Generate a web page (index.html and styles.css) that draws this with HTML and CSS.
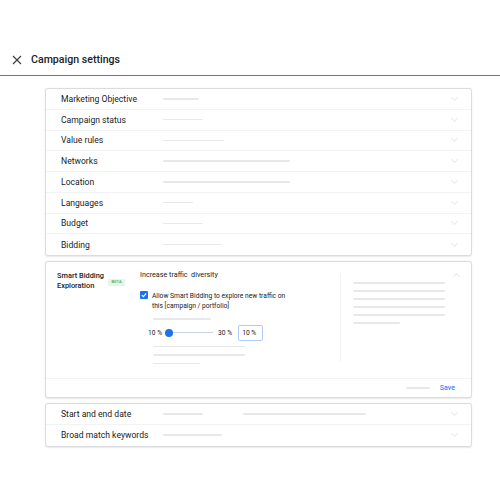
FILE: index.html
```html
<!DOCTYPE html>
<html>
<head>
<meta charset="utf-8">
<link rel="stylesheet" href="styles.css">
</head>
<body>
<header class="topbar">
  <svg class="close" width="10" height="10" viewBox="0 0 10 10"><path d="M1 1L9 9M9 1L1 9" stroke="#3c4043" stroke-width="1.2" fill="none"/></svg>
  <h1 class="title">Campaign settings</h1>
</header>
<main class="content">
  <section class="card">
    <div class="row"><span class="label">Marketing Objective</span><span class="ph" style="width:36px"></span><span class="chev"></span></div>
    <div class="row"><span class="label">Campaign status</span><span class="ph" style="width:40px"></span><span class="chev"></span></div>
    <div class="row"><span class="label">Value rules</span><span class="ph" style="width:61px"></span><span class="chev"></span></div>
    <div class="row"><span class="label">Networks</span><span class="ph" style="width:127px"></span><span class="chev"></span></div>
    <div class="row"><span class="label">Location</span><span class="ph" style="width:127px"></span><span class="chev"></span></div>
    <div class="row"><span class="label">Languages</span><span class="ph" style="width:30px"></span><span class="chev"></span></div>
    <div class="row"><span class="label">Budget</span><span class="ph" style="width:40px"></span><span class="chev"></span></div>
    <div class="row last"><span class="label">Bidding</span><span class="ph" style="width:59px"></span><span class="chev"></span></div>
  </section>

  <section class="card expanded">
    <div class="exp-body">
      <div class="exp-title">
        <span class="exp-name">Smart Bidding<br>Exploration</span>
        <span class="beta">BETA</span>
      </div>
      <div class="exp-main">
        <div class="sub">Increase traffic&nbsp; diversity</div>
        <div class="check-row">
          <span class="checkbox"><svg width="8" height="8" viewBox="0 0 8 8"><path d="M1.8 4.1L3.3 5.6L6.2 2.5" stroke="#fff" stroke-width="1.1" fill="none"/></svg></span>
          <span class="check-text">Allow Smart Bidding to explore new traffic on<br>this [campaign / portfolio]</span>
        </div>
        <div class="indent">
          <span class="ph" style="width:58px"></span>
          <div class="slider-row">
            <span class="pct">10 %</span>
            <span class="slider"><span class="knob"></span><span class="track"></span></span>
            <span class="pct">30 %</span>
            <span class="input">10 %</span>
          </div>
          <div class="ph-stack">
            <span class="ph" style="width:92px"></span>
            <span class="ph" style="width:92px"></span>
            <span class="ph" style="width:47px"></span>
          </div>
        </div>
      </div>
      <div class="exp-side">
        <span class="ph" style="width:92px"></span>
        <span class="ph" style="width:92px"></span>
        <span class="ph" style="width:92px"></span>
        <span class="ph" style="width:92px"></span>
        <span class="ph" style="width:92px"></span>
        <span class="ph" style="width:47px"></span>
      </div>
      <span class="chev up"></span>
    </div>
    <div class="exp-foot">
      <span class="ph foot-ph" style="width:24px"></span>
      <span class="save">Save</span>
    </div>
  </section>

  <section class="card">
    <div class="row"><span class="label">Start and end date</span><span class="ph" style="width:40px"></span><span class="ph gap-ph" style="width:123px"></span><span class="chev"></span></div>
    <div class="row last"><span class="label">Broad match keywords</span><span class="ph" style="width:59px"></span><span class="chev"></span></div>
  </section>
</main>
</body>
</html>
```

FILE: styles.css
```css
* { box-sizing: border-box; }
html, body { margin: 0; padding: 0; background: #fff; }
body { font-family: Roboto, "Noto Sans", Arial, sans-serif; color: #202124; width: 500px; height: 500px; overflow: hidden; }

.topbar {
  height: 76px;
  padding: 44px 0 0 12px;
  display: flex;
  align-items: center;
  border-bottom: 1.3px solid #70757a;
}
.close { width: 10px; height: 10px; flex: none; }
.title {
  margin: 0 0 0 9px;
  font-size: 10.6px;
  font-weight: 500;
  line-height: 14px;
  color: #202124;
}

.content {
  padding: 12px 28px 0 45px;
  display: flex;
  flex-direction: column;
  gap: 5px;
}

.card {
  border: 1px solid #dadce0;
  border-radius: 3px;
  box-shadow: 0 0.5px 1.5px rgba(60,64,67,0.12);
  background: #fff;
}

.row {
  height: 20.75px;
  display: flex;
  align-items: center;
  padding: 0 12px 0 15px;
  border-bottom: 1px solid #f1f3f4;
}
.row.last { border-bottom: none; }
.label { width: 102px; flex: none; font-size: 8.6px; color: #202124; }
.ph { display: block; height: 1.5px; background: #e6e8eb; border-radius: 1px; flex: none; }
.gap-ph { margin-left: 40px; }

.chev {
  margin-left: auto;
  width: 5px; height: 5px;
  border-right: 1px solid #e8eaed;
  border-bottom: 1px solid #e8eaed;
  transform: rotate(45deg);
  margin-right: 2px;
  margin-top: -3px;
  flex: none;
}
.chev.up { transform: rotate(-135deg); margin-top: 3px; margin-right: 0; align-self: flex-start; }

.expanded { display: flex; flex-direction: column; }
.exp-body {
  display: flex;
  padding: 9px 12px 0 11px;
  height: 116px;
}
.exp-title { width: 83px; flex: none; display: flex; align-items: flex-start; gap: 4px; }
.exp-name { font-size: 7.4px; font-weight: 500; line-height: 10px; color: #202124; }
.beta {
  margin-top: 8px;
  background: #e6f4ea;
  color: #34a853;
  font-size: 4px;
  font-weight: 500;
  padding: 1px 3.5px;
  line-height: 4.5px;
  letter-spacing: 0.1px;
}
.exp-main { width: 201px; flex: none; border-right: 1px solid #f1f3f4; height: 88px; margin-top: 3px; }
.sub { font-size: 7.2px; line-height: 9px; margin-top: -4px; }
.check-row { display: flex; align-items: flex-start; gap: 4px; margin-top: 11px; }
.checkbox {
  width: 8px; height: 8px; background: #1a73e8; border-radius: 1px;
  display: flex; flex: none; margin-top: 1px;
}
.check-text { font-size: 6.7px; line-height: 10px; margin-top: 1px; }
.indent { padding-left: 13px; margin-top: 7px; }
.slider-row { display: flex; align-items: center; margin-top: 5px; margin-left: -5px; height: 16px; }
.pct { font-size: 6.7px; }
.slider { position: relative; width: 49px; height: 8px; margin-left: 3px; margin-right: 4px; display: flex; align-items: center; }
.knob { position: absolute; left: 0; top: 0; width: 8px; height: 8px; border-radius: 50%; background: #1a73e8; }
.track { margin-left: 8px; width: 40px; height: 1.5px; background: #c8d3e6; }
.input {
  margin-left: 6px;
  width: 25px; height: 16px;
  border: 1px solid #aecbfa;
  border-radius: 2px;
  font-size: 6.7px;
  display: flex; align-items: center; padding-left: 3px;
}
.ph-stack { display: flex; flex-direction: column; gap: 7px; margin-top: 5px; }
.exp-side { flex: none; width: 105px; padding: 11px 0 0 12px; display: flex; flex-direction: column; gap: 6.5px; }

.exp-foot {
  border-top: 1px solid #f1f3f4;
  height: 19px;
  display: flex;
  align-items: center;
  justify-content: flex-end;
  padding-right: 16px;
  gap: 10px;
}
.save { font-size: 7px; color: #4285f4; font-weight: 500; }
```
